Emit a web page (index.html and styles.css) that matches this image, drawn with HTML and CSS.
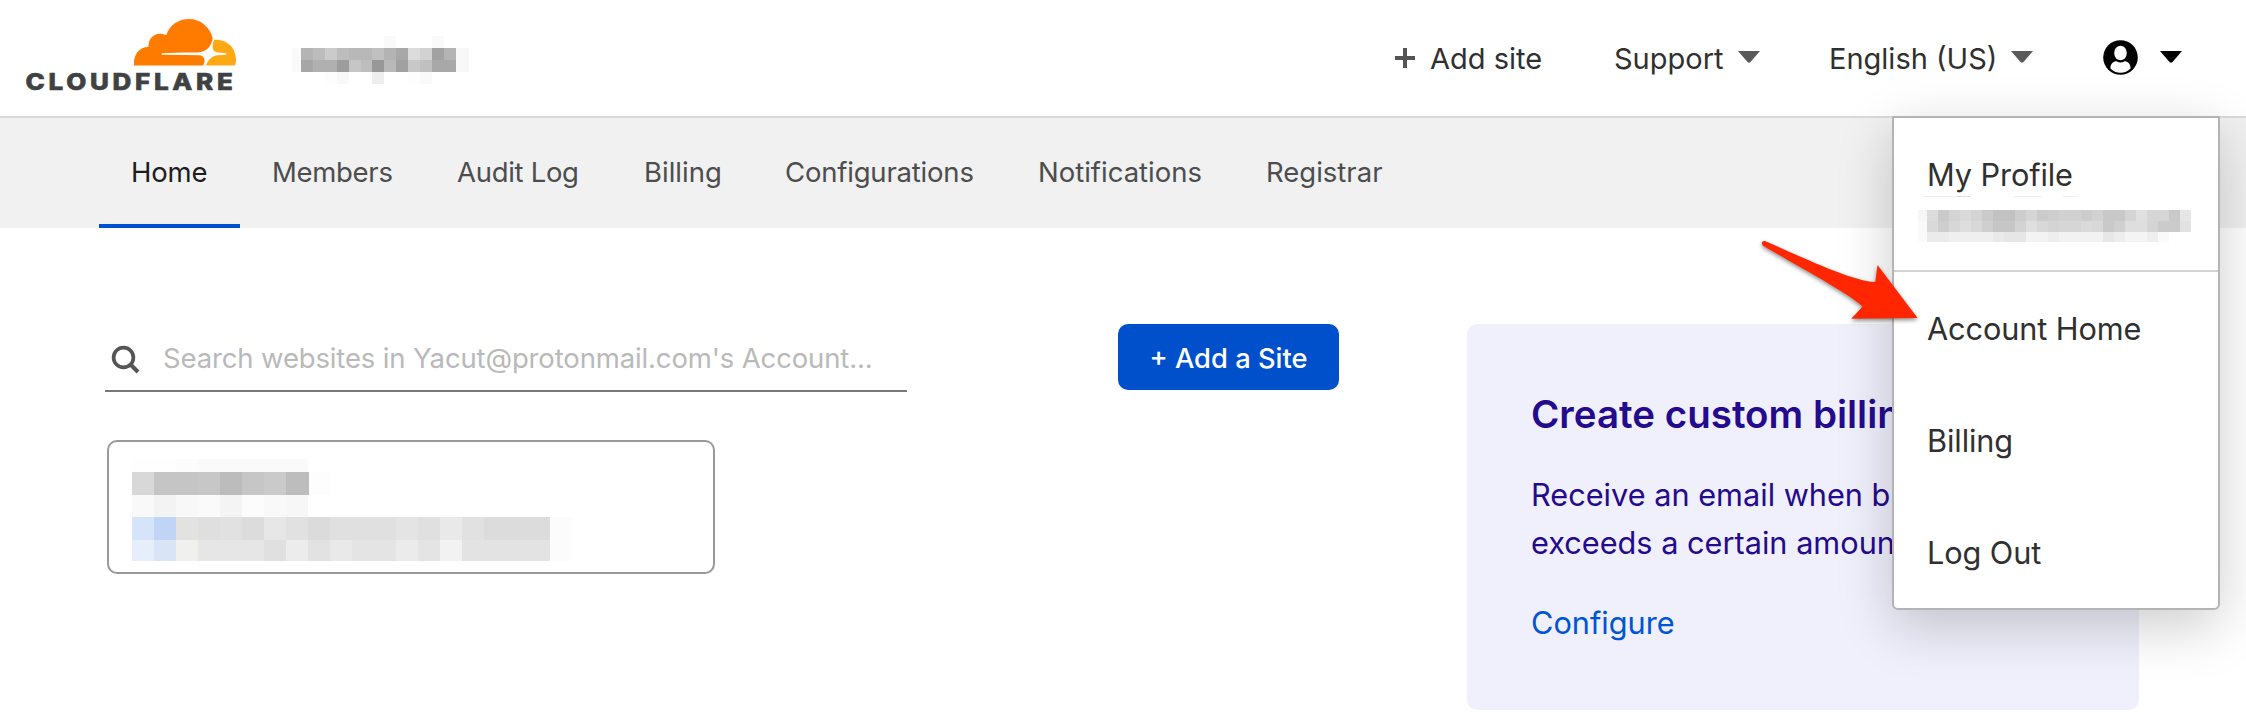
FILE: index.html
```html
<!DOCTYPE html>
<html lang="en">
<head>
<meta charset="utf-8">
<title>Cloudflare</title>
<link rel="stylesheet" href="styles.css">
</head>
<body>
<header class="topbar">
  <svg class="logo" width="214" height="84" viewBox="24 16 214 84" role="img" aria-label="Cloudflare">
    <path fill="#ff7b00" d="M134 65.5C133.4 54 139 47.4 148.6 46.8C147.6 37 157 30.5 166.3 35.2C169.5 25 178.5 19 189 19C200.500 19 210 27 212.700 38C211.500 46 207 51.800 198 52.500L184 52.600L162 53.200Q161 54 162 54.800L184 55.100L199.500 55.200C203.500 55.700 205 58.500 204.500 61.500L203.300 65.500Z"/>
    <path fill="#fea914" d="M214 39.800C227 38.800 236.200 48 236 60Q235.900 63 235 65.500L206 65.500C208.300 59 212.500 55.800 217.500 55.200L226 54.700Q227 54 226 53.300L217.500 52.500C212.500 51.500 212 47.500 213 43.500Z"/>
    <text class="wordmark" x="25.500" y="90" textLength="211" lengthAdjust="spacingAndGlyphs">CLOUDFLARE</text>
  </svg>
  <div class="redacted account-name" aria-hidden="true">
    <i class="an1"></i><i class="an2"></i><i class="an3"></i><i class="an4"></i>
  </div>
  <nav class="tools">
    <a class="tool add"><svg width="20" height="20"><path d="M10 0V20M0 10H20" stroke="#555" stroke-width="4"/></svg><span>Add site</span></a>
    <a class="tool support"><span>Support</span><svg class="caret" width="22" height="12"><path d="M0 0H22L12.500 11Q11 12.600 9.500 11Z" fill="#595959"/></svg></a>
    <a class="tool language"><span>English (US)</span><svg class="caret" width="22" height="12"><path d="M0 0H22L12.500 11Q11 12.600 9.500 11Z" fill="#595959"/></svg></a>
    <a class="tool user">
      <svg width="35" height="35" viewBox="0 0 35 35"><circle cx="17.500" cy="17.500" r="17.300"/><ellipse cx="17.500" cy="13" rx="6.300" ry="7.300" fill="#fff"/><path d="M7.400 28.500C7.400 23.500 10.500 21.200 13.500 21.200Q17.500 23.800 21.500 21.200C24.500 21.200 27.600 23.500 27.600 28.500Q23.500 32.700 17.500 32.700T7.400 28.500Z" fill="#fff"/></svg>
      <svg class="caret" width="22" height="12"><path d="M0 0H22L12.500 11Q11 12.600 9.500 11Z"/></svg>
    </a>
  </nav>
  <div class="menu">
    <div class="profile">
      <a class="menu-item">My Profile</a>
      <div class="redacted email" aria-hidden="true"><i class="em0"></i><i class="em1"></i><i class="em2"></i><i class="em3"></i></div>
    </div>
    <a class="menu-item">Account Home</a>
    <a class="menu-item">Billing</a>
    <a class="menu-item">Log Out</a>
  </div>
</header>
<nav class="tabs">
  <a class="tab home active">Home</a>
  <a class="tab members">Members</a>
  <a class="tab audit">Audit Log</a>
  <a class="tab billing">Billing</a>
  <a class="tab config">Configurations</a>
  <a class="tab notif">Notifications</a>
  <a class="tab registrar">Registrar</a>
</nav>
<main class="content">
  <section class="sites">
    <div class="controls">
      <label class="search">
        <svg width="30" height="30" viewBox="0 0 30 30" fill="none" stroke="#555"><circle cx="12.500" cy="12.500" r="9.900" stroke-width="3.700"/><path d="M19 19L27 27" stroke-width="4"/></svg>
        <span>Search websites in Yacut@protonmail.com's Account...</span>
      </label>
      <a class="button">+ Add a Site</a>
    </div>
    <div class="site-card">
      <div class="redacted site" aria-hidden="true"><i class="s1"></i><i class="s2"></i><i class="s3"></i><i class="s4"></i><i class="s5"></i></div>
    </div>
  </section>
  <aside class="promo">
    <h2>Create custom billing</h2>
    <p>Receive an email when billing<br>exceeds a certain amount</p>
    <a>Configure</a>
  </aside>
</main>
<svg class="pointer" width="170" height="96" viewBox="1755 235 170 96"><path fill="#ff2600" d="M1765.500 241.300C1800 256 1852 281.500 1875.300 282L1877.500 265L1917.600 318L1851.300 318.800L1862.600 306.500C1847 292 1790 262 1762.800 245.400C1760.500 243 1762.500 240 1765.500 241.300Z"/></svg>
</body>
</html>
```
FILE: styles.css
```css
* { box-sizing: border-box; }
body {
  margin: 0;
  height: 720px;
  overflow: hidden;
  position: relative;
  background: #fff;
  color: #303030;
  font-family: Inter, "Liberation Sans", sans-serif;
}
svg { display: block; flex: none; }
a { white-space: nowrap; }

.topbar {
  position: relative;
  z-index: 2;
  display: flex;
  height: 118px;
  border-bottom: 2px solid #d9d9d9;
}
.logo { margin: 16px 0 0 24px; overflow: visible; }
.wordmark { font-size: 22.5px; font-weight: 800; letter-spacing: 3.2px; fill: #404242; stroke: #404242; stroke-width: .6; }

.redacted i { display: block; }
.account-name { margin: 36px 0 0 54px; width: 177px; }
.account-name i { height: 12px; }
.an1 { background: linear-gradient(90deg, #fff 0 92px, #fafafa 0 104px, #fff 0 140px, #fafafa 0 152px, #fff 0); }
.an2 { background: linear-gradient(90deg, #fafafa 0 9px, #b4b4b4 0 21px, #bcbcbc 0 33px, #cbcbcb 0 45px, #bdbdbd 0 57px, #b8b8b8 0 80px, #c0c0c0 0 92px, #b3b3b3 0 104px, #a8a8a8 0 116px, #dcdcdc 0 128px, #d2d2d2 0 140px, #a2a2a2 0 152px, #b4b4b4 0 164px, #f8f8f8 0); }
.an3 { background: linear-gradient(90deg, #fafafa 0 9px, #a6a6a6 0 21px, #b0b0b0 0 45px, #9d9d9d 0 57px, #c6c6c6 0 69px, #bebebe 0 80px, #989898 0 92px, #b9b9b9 0 104px, #a1a1a1 0 116px, #c8c8c8 0 128px, #c0c0c0 0 140px, #a8a8a8 0 164px, #f8f8f8 0); }
.an4 { background: linear-gradient(90deg, #fff 0 33px, #fdfdfd 0 45px, #f9f9f9 0 57px, #fff 0 80px, #eee 0 92px, #fff 0 116px, #fdfdfd 0 128px, #f9f9f9 0 140px, #fff 0); }

.tools { display: flex; height: 117px; margin-left: 926px; font-size: 29px; line-height: 36px; }
.tool { display: flex; align-items: center; }
.tool > svg { position: relative; top: -1px; }
.add { width: 219px; gap: 15px; }
.support { width: 215px; }
.language { width: 274px; }
.support span { width: 124px; }
.language span { width: 182px; }
.user { gap: 22px; }
.tools .caret { top: -2px; }

.menu {
  position: absolute;
  top: 116px;
  left: 1892px;
  width: 328px;
  height: 494px;
  border: 2px solid #b4b4b4;
  border-radius: 0 0 6px 6px;
  background: #fff;
  box-shadow: 0 16px 56px rgba(0, 0, 0, .2);
  font-size: 30.7px;
  letter-spacing: -.1px;
}
.menu-item { display: block; padding: 37px 0 37px 33px; line-height: 38px; }
.profile { height: 154px; margin-bottom: 1px; border-bottom: 2px solid #d2d2d2; }
.profile .menu-item { padding: 38px 0 2px 33px; }
.email { width: 273px; margin-left: 24px; }
.email i { height: 11px; }
.email .em0 { height: 14px; background: linear-gradient(90deg, #eee 0 34px, #ddd 0 47px, #fff 0 90px, #eee 0 119px, #fff 0 140px, #eee 0 155px, #fff 0) 5px 0 / 100% 1px no-repeat; }
.em1 { background: linear-gradient(90deg, #f6f6f6 0 9px, #dcdcdc 0 20px, #cacaca 0 31px, #d4d4d4 0 42px, #dadada 0 53px, #d4d4d4 0 64px, #cacaca 0 75px, #c2c2c2 0 97px, #cdcdcd 0 108px, #d6d6d6 0 119px, #cbcbcb 0 130px, #cecece 0 141px, #d1d1d1 0 163px, #ccc 0 174px, #d1d1d1 0 185px, #c8c8c8 0 207px, #d4d4d4 0 218px, #e0e0e0 0 229px, #d6d6d6 0 251px, #c9c9c9 0 262px, #e6e6e6 0); }
.em2 { background: linear-gradient(90deg, #f9f9f9 0 9px, #d9d9d9 0 20px, #cecece 0 31px, #d7d7d7 0 42px, #dedede 0 53px, #d8d8d8 0 64px, #cfcfcf 0 75px, #c6c6c6 0 97px, #d3d3d3 0 108px, #dfdfdf 0 119px, #d8d8d8 0 130px, #d4d4d4 0 141px, #d6d6d6 0 163px, #dadada 0 174px, #d8d8d8 0 185px, #c9c9c9 0 196px, #d0d0d0 0 207px, #dedede 0 229px, #d5d5d5 0 240px, #cbcbcb 0 262px, #e2e2e2 0); }
.email .em3 { height: 10px; background: linear-gradient(90deg, #fafafa 0 9px, #ebebeb 0 31px, #efefef 0 75px, #e9e9e9 0 86px, #e6e6e6 0 108px, #f3f3f3 0 130px, #eee 0 141px, #f2f2f2 0 185px, #e7e7e7 0 196px, #ededed 0 207px, #f4f4f4 0 229px, #eee 0 240px, #fafafa 0 251px, #fff 0); }

.tabs {
  display: flex;
  height: 110px;
  padding-left: 99px;
  background: #f1f1f1;
  color: #4d4d4d;
  font-size: 27.5px;
  line-height: 108px;
  letter-spacing: -.2px;
}
.tab { flex: none; padding-left: 32px; }
.active { border-bottom: 4px solid #0051d1; color: #1d1d1d; }
.home { width: 141px; border-image: linear-gradient(90deg, #0051d1 140px, #f1f1f1 0) 4; }
.members { width: 185px; letter-spacing: -.3px; }
.audit { width: 187px; letter-spacing: -.3px; }
.billing { width: 141px; letter-spacing: 0; }
.config { width: 253px; }
.notif { width: 228px; letter-spacing: 0; }
.registrar { letter-spacing: 0; }

.content { display: flex; padding: 96px 0 0 105px; }
.sites { width: 1362px; }
.controls { display: flex; justify-content: space-between; width: 1234px; }
.search {
  display: flex;
  align-items: center;
  width: 802px;
  height: 68px;
  padding-left: 5px;
  border-bottom: 2px solid #797979;
  color: #b9b9b9;
  font-size: 27.5px;
  letter-spacing: -.14px;
  white-space: nowrap;
}
.search svg { margin: 5px 22px 0 1px; }
.search span { padding-top: 2px; }
.button {
  width: 221px;
  height: 66px;
  border-radius: 10px;
  background: #004fcb;
  color: #fff;
  font-size: 27.3px;
  font-weight: 500;
  line-height: 69px;
  text-align: center;
}
.site-card {
  width: 608px;
  height: 134px;
  margin: 48px 0 0 2px;
  padding: 17px 0 0 23px;
  border: 2px solid #999;
  border-radius: 10px;
}
.site { width: 440px; }
.site i { height: 22px; }
.site .s1 { height: 13px; background: linear-gradient(90deg, #fefefe 0 44px, #fcfcfc 0 66px, #fafafa 0 176px, #fff 0); }
.site .s2 { height: 23px; background: linear-gradient(90deg, #d8d8d8 0 22px, #c5c5c5 0 66px, #c7c7c7 0 88px, #bcbcbc 0 110px, #c6c6c6 0 132px, #cacaca 0 154px, #bdbdbd 0 177px, #fdfdfd 0 198px, #fff 0); }
.s3 { background: linear-gradient(90deg, #f9f9f9 0 22px, #f3f3f3 0 44px, #f8f8f8 0 66px, #fafafa 0 88px, #f4f4f4 0 110px, #fcfcfc 0 132px, #f9f9f9 0 154px, #f7f7f7 0 176px, #fff 0); }
.site .s4 { height: 23px; background: linear-gradient(90deg, #d5e4f8 0 22px, #c0d5f5 0 44px, #e2e2e0 0 66px, #dfdfdf 0 88px, #e1e1e1 0 110px, #dcdcdc 0 132px, #e7e7e7 0 154px, #e1e1e1 0 176px, #dbdbdb 0 198px, #e0e0e0 0 264px, #e4e4e4 0 286px, #e0e0e0 0 308px, #e9e9e9 0 330px, #e1e1e1 0 352px, #dcdcdc 0 418px, #fcfcfc 0); }
.site .s5 { height: 21px; background: linear-gradient(90deg, #e7eefb 0 22px, #d9e4f7 0 44px, #f0f0ee 0 66px, #e6e6e6 0 132px, #e0e0e0 0 154px, #ececec 0 176px, #e2e2e2 0 198px, #e9e9e9 0 220px, #e4e4e4 0 264px, #ebebeb 0 286px, #e4e4e4 0 308px, #f2f2f2 0 330px, #e3e3e3 0 418px, #fcfcfc 0); }

.promo {
  width: 672px;
  height: 386px;
  padding: 65px 64px 0;
  border-radius: 10px;
  background: #f0f0fc;
  color: #240a8c;
  font-size: 30.7px;
  white-space: nowrap;
}
.promo h2 { margin: 0; font-size: 38.5px; font-weight: 600; line-height: 50px; }
.promo p { margin: 32px 0 0; line-height: 48px; }
.promo a { display: block; margin-top: 32px; color: #0055d4; line-height: 48px; }

/* Annotation arrow laid over the page and the open menu */
.pointer { position: absolute; z-index: 3; top: 235px; left: 1755px; filter: drop-shadow(0 2px 2px rgba(0, 0, 0, .45)); }
```
